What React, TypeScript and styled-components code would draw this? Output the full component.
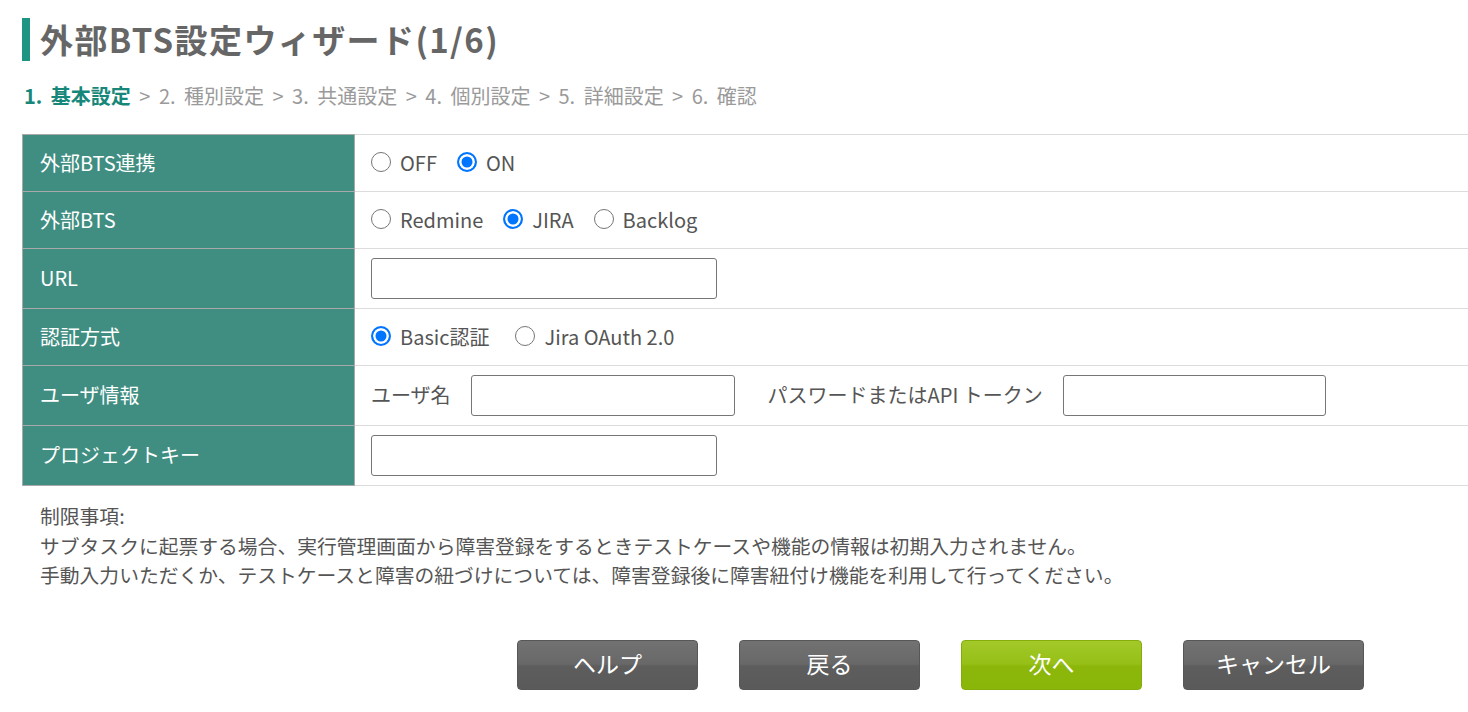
import React from "react";
import styled, { createGlobalStyle } from "styled-components";

const Global = createGlobalStyle`
  html, body { margin: 0; padding: 0; background: #fff; }
  body { font-family: "Noto Sans CJK JP", "Noto Sans", sans-serif; color: #555; }
  * { box-sizing: border-box; }
`;

const Page = styled.div`
  padding: 18px 0 0 22px;
  width: 1468px;
  overflow: hidden;
`;

const Title = styled.h1`
  margin: 0;
  height: 43px;
  border-left: 8px solid #1e9582;
  padding-left: 10px;
  font-size: 33px;
  line-height: 43px;
  font-weight: 700;
  color: #666;
  letter-spacing: 1.4px;
  white-space: nowrap;
`;

const Steps = styled.div`
  margin-top: 22px;
  padding-left: 2px;
  font-size: 20px;
  line-height: 26px;
  word-spacing: 4px;
  color: #9a9a9a;
  white-space: nowrap;
`;

const Step = styled.span<{ $active?: boolean }>`
  color: ${(p) => (p.$active ? "#17877a" : "#9a9a9a")};
  font-weight: ${(p) => (p.$active ? 700 : 400)};
`;

const Table = styled.table`
  margin-top: 25px;
  width: 1446px;
  border-collapse: collapse;
  font-size: 20px;
`;

const Row = styled.tr`
  border-top: 1px solid #dcdcdc;
  border-bottom: 1px solid #dcdcdc;
`;

const Th = styled.th`
  width: 332px;
  background: #408e82;
  color: #fff;
  font-weight: 400;
  text-align: left;
  padding: 0 0 2px 17px;
  border: 1px solid #a9a9a9;
  white-space: nowrap;
`;

const Td = styled.td`
  padding: 9px 16px;
  color: #555;
`;

const Radios = styled.div<{ $gap?: number }>`
  display: flex;
  align-items: center;
  gap: ${(p) => p.$gap ?? 20}px;
  height: 38px;
  padding-bottom: 2px;
`;

const RadioLabel = styled.label`
  display: inline-flex;
  align-items: center;
  gap: 9px;
  color: #555;
  white-space: nowrap;
`;

const RadioInput = styled.input`
  appearance: none;
  margin: 0;
  width: 20px;
  height: 20px;
  border-radius: 50%;
  border: 1.5px solid #767676;
  background: #fff;
  &:checked {
    border: 2px solid #0075ff;
    background: #0075ff;
    box-shadow: inset 0 0 0 2.5px #fff;
  }
`;

const TextInput = styled.input<{ $w: number }>`
  width: ${(p) => p.$w}px;
  height: 41px;
  border: 1px solid #767676;
  border-radius: 3px;
  padding: 0 8px;
  font: inherit;
  display: block;
`;

const UserLine = styled.div`
  display: flex;
  align-items: center;
`;

const FieldLabel = styled.span<{ $gap: number; $lead?: number }>`
  margin-right: ${(p) => p.$gap}px;
  margin-left: ${(p) => p.$lead ?? 0}px;
  white-space: nowrap;
  color: #555;
  padding-bottom: 2px;
`;

const Notes = styled.div`
  margin-top: 15px;
  padding-left: 18px;
  font-size: 19.8px;
  line-height: 29.5px;
  color: #555;
  white-space: nowrap;
`;

const Buttons = styled.div`
  display: flex;
  gap: 41px;
  margin-top: 50px;
  padding-left: 495px;
`;

const Button = styled.button<{ $primary?: boolean }>`
  width: 181px;
  height: 50px;
  border-radius: 4px;
  border: 1px solid ${(p) => (p.$primary ? "#84ad0c" : "#575757")};
  background: ${(p) =>
    p.$primary
      ? "linear-gradient(#a2c929 0%, #96bf17 48%, #8cb70a 52%, #8ab60a 100%)"
      : "linear-gradient(#727272 0%, #686868 48%, #5d5d5d 52%, #5a5a5a 100%)"};
  color: #fff;
  font-family: "Noto Sans CJK JP", "Noto Sans", sans-serif;
  font-size: 23px;
  cursor: pointer;
  padding: 0 0 3px;
`;

function Radio({ name, label, checked }: { name: string; label: string; checked?: boolean }) {
  return (
    <RadioLabel>
      <RadioInput type="radio" name={name} defaultChecked={checked} />
      {label}
    </RadioLabel>
  );
}

export default function App() {
  return (
    <>
      <Global />
      <Page>
        <Title>外部BTS設定ウィザード(1/6)</Title>
        <Steps>
          <Step $active>1. 基本設定</Step> &gt; 2. 種別設定 &gt; 3. 共通設定 &gt; 4. 個別設定 &gt; 5. 詳細設定 &gt; 6. 確認
        </Steps>
        <Table>
          <tbody>
            <Row>
              <Th>外部BTS連携</Th>
              <Td>
                <Radios>
                  <Radio name="link" label="OFF" />
                  <Radio name="link" label="ON" checked />
                </Radios>
              </Td>
            </Row>
            <Row>
              <Th>外部BTS</Th>
              <Td>
                <Radios>
                  <Radio name="bts" label="Redmine" />
                  <Radio name="bts" label="JIRA" checked />
                  <Radio name="bts" label="Backlog" />
                </Radios>
              </Td>
            </Row>
            <Row>
              <Th>URL</Th>
              <Td>
                <TextInput $w={346} />
              </Td>
            </Row>
            <Row>
              <Th>認証方式</Th>
              <Td>
                <Radios $gap={26}>
                  <Radio name="auth" label="Basic認証" checked />
                  <Radio name="auth" label="Jira OAuth 2.0" />
                </Radios>
              </Td>
            </Row>
            <Row>
              <Th>ユーザ情報</Th>
              <Td>
                <UserLine>
                  <FieldLabel $gap={20}>ユーザ名</FieldLabel>
                  <TextInput $w={264} />
                  <FieldLabel $gap={20} $lead={33}>パスワードまたはAPI トークン</FieldLabel>
                  <TextInput $w={263} />
                </UserLine>
              </Td>
            </Row>
            <Row>
              <Th>プロジェクトキー</Th>
              <Td>
                <TextInput $w={346} />
              </Td>
            </Row>
          </tbody>
        </Table>
        <Notes>
          制限事項:
          <br />
          サブタスクに起票する場合、実行管理画面から障害登録をするときテストケースや機能の情報は初期入力されません。
          <br />
          手動入力いただくか、テストケースと障害の紐づけについては、障害登録後に障害紐付け機能を利用して行ってください。
        </Notes>
        <Buttons>
          <Button>ヘルプ</Button>
          <Button>戻る</Button>
          <Button $primary>次へ</Button>
          <Button>キャンセル</Button>
        </Buttons>
      </Page>
    </>
  );
}
